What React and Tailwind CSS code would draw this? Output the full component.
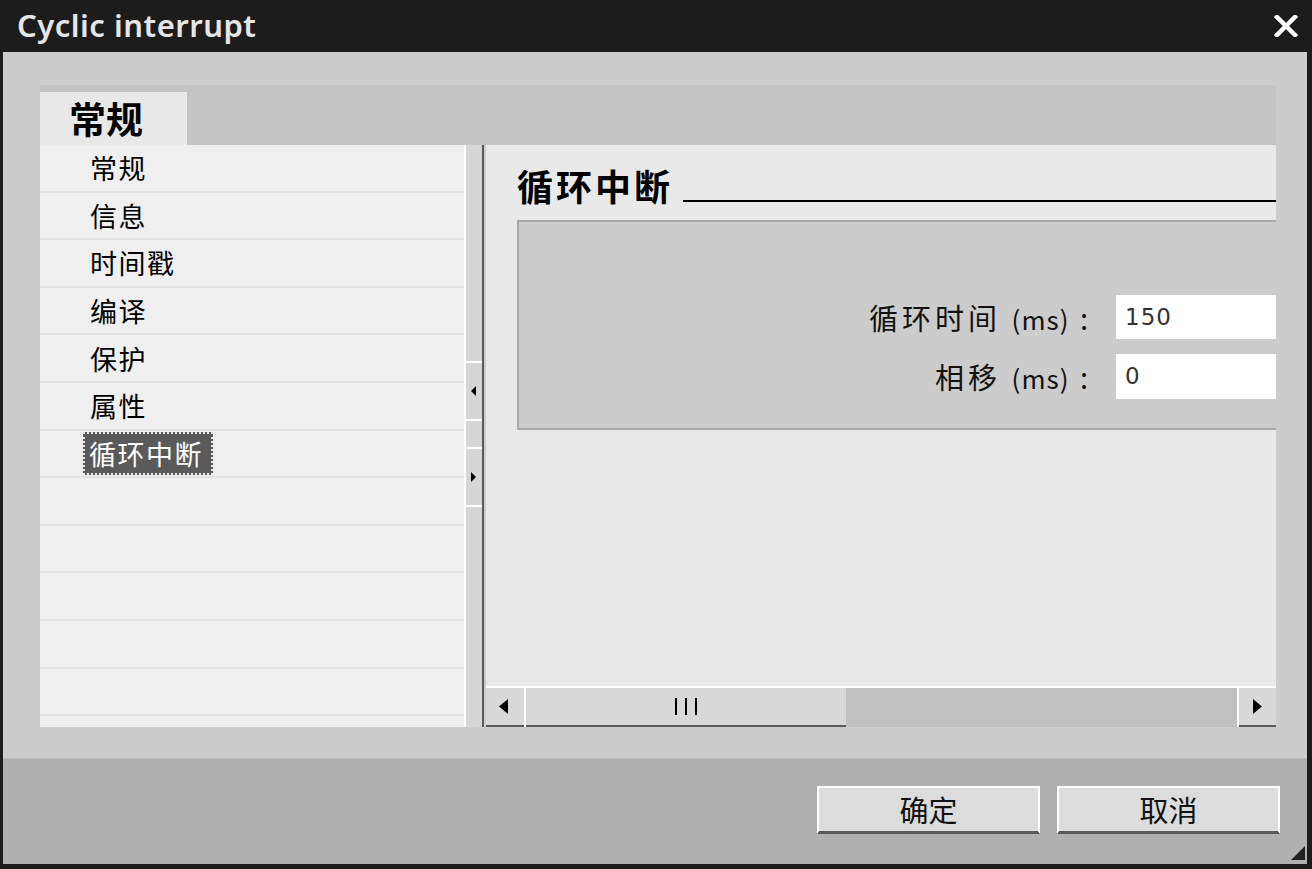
import React from "react";

const CJK = { fontFamily: '"Noto Sans CJK SC", "Noto Sans", sans-serif' };

function TriLeft({ className = "" }) {
  return (
    <svg viewBox="0 0 8 12" preserveAspectRatio="none" className={className}>
      <polygon points="8,0 8,12 0,6" fill="#000" />
    </svg>
  );
}
function TriRight({ className = "" }) {
  return (
    <svg viewBox="0 0 8 12" preserveAspectRatio="none" className={className}>
      <polygon points="0,0 0,12 8,6" fill="#000" />
    </svg>
  );
}

const items = ["常规", "信息", "时间戳", "编译", "保护", "属性", "循环中断", "", "", "", "", ""];

export default function App() {
  return (
    <div
      className="w-[1312px] h-[869px] bg-[#1c1c1c] flex flex-col overflow-hidden"
      style={CJK}
    >
      {/* Title bar */}
      <div className="h-[52px] flex items-center justify-between pl-[17px] pr-[14px] shrink-0">
        <span
          className="text-[31px] font-semibold text-[#e6e6e6] leading-none -mt-[2px] tracking-[0.5px]"
          style={{ fontFamily: '"Noto Sans", "Open Sans", sans-serif' }}
        >
          Cyclic interrupt
        </span>
        <svg width="24" height="22" viewBox="0 0 24 22" className="-mt-[1px]">
          <path d="M3 2 L21 20 M21 2 L3 20" stroke="#fff" strokeWidth="4.5" strokeLinecap="square" />
        </svg>
      </div>

      {/* Body */}
      <div className="flex-1 ml-[3px] mr-[5px] mb-[5px] flex flex-col">
        {/* Upper area */}
        <div className="h-[706px] bg-[#cccccc] pl-[37px] pr-[31px] pt-[33px] flex flex-col">
          {/* Tab bar */}
          <div className="h-[60px] bg-[#c4c4c4] flex items-end shrink-0">
            <div className="w-[147px] h-[53px] bg-[#e8e8e8] flex items-center pl-[29px]">
              <span className="text-[37px] font-bold text-black leading-none">常规</span>
            </div>
          </div>

          {/* Main */}
          <div className="h-[582px] flex">
            {/* Left list */}
            <div className="w-[426px] bg-[#efefef] border-r-2 border-white flex flex-col">
              {items.map((t, i) => (
                <div
                  key={i}
                  className="h-[47.6px] border-b-2 border-[#e3e3e3] flex items-center pl-[50px] shrink-0"
                >
                  {t === "循环中断" ? (
                    <span className="bg-[#5a5a5a] text-white text-[27px] leading-none tracking-[1.5px] pl-[6px] pr-[10px] py-[8px] outline-2 outline-dotted outline-[#e8e8e8] -outline-offset-2 -ml-[7px]">
                      {t}
                    </span>
                  ) : (
                    <span className="text-[27px] text-black leading-none tracking-[1.5px]">{t}</span>
                  )}
                </div>
              ))}
            </div>

            {/* Splitter */}
            <div className="w-[20px] flex">
              <div className="w-[16px] bg-[#d6d6d6] flex flex-col">
                <div className="h-[216px]" />
                <div className="h-[2px] bg-white" />
                <div className="h-[56px] flex items-center pl-[5px]">
                  <TriLeft className="w-[5px] h-[10px] shrink-0" />
                </div>
                <div className="h-[2px] bg-white" />
                <div className="h-[26px]" />
                <div className="h-[2px] bg-white" />
                <div className="h-[56px] flex items-center pl-[5px]">
                  <TriRight className="w-[5px] h-[10px] shrink-0" />
                </div>
                <div className="h-[2px] bg-white" />
              </div>
              <div className="w-[2px] bg-[#5a5a5a]" />
              <div className="w-[2px] bg-[#cccccc]" />
            </div>

            {/* Right panel */}
            <div className="flex-1 flex flex-col">
              <div className="flex-1 bg-[#e9e9e9] pl-[31px] pt-[18px] overflow-hidden flex flex-col">
                <div className="flex items-end h-[40px]">
                  <span className="text-[36px] font-bold text-black leading-none tracking-[3px]">循环中断</span>
                  <div className="flex-1 h-[2px] bg-black ml-[10px] mb-[1px]" />
                </div>
                <div className="mt-[17px] h-[210px] bg-[#cccccc] border-l-2 border-t-2 border-b-2 border-[#a9a9a9] flex flex-col items-end pt-[73px] gap-[15px]">
                  <div className="flex items-center h-[44px]">
                    <span className="text-[29px] text-[#111] leading-none tracking-[4px]">
                      循环时间 <span className="text-[26px] tracking-[1px]">(ms)</span> :
                    </span>
                    <div
                      className="ml-[24px] w-[160px] h-[44px] bg-white flex items-center pl-[9px] text-[23px] text-[#333] tracking-[1px]"
                      style={{ fontFamily: '"DejaVu Sans", sans-serif' }}
                    >
                      150
                    </div>
                  </div>
                  <div className="flex items-center h-[45px]">
                    <span className="text-[29px] text-[#111] leading-none tracking-[4px]">
                      相移 <span className="text-[26px] tracking-[1px]">(ms)</span> :
                    </span>
                    <div
                      className="ml-[24px] w-[160px] h-[45px] bg-white flex items-center pl-[9px] text-[23px] text-[#333]"
                      style={{ fontFamily: '"DejaVu Sans", sans-serif' }}
                    >
                      0
                    </div>
                  </div>
                </div>
              </div>
              <div className="h-[2px] bg-white" />
              {/* Horizontal scrollbar */}
              <div className="h-[39px] flex bg-[#c0c0c0]">
                <div className="w-[38px] bg-[#d8d8d8] border-b-2 border-[#5a5a5a] flex items-center justify-center">
                  <TriLeft className="w-[9px] h-[15px] shrink-0 -ml-[4px]" />
                </div>
                <div className="w-[2px] bg-white" />
                <div className="w-[320px] bg-[#d8d8d8] border-b-2 border-[#5a5a5a] flex items-center justify-center gap-[8px]">
                  <div className="w-[2px] h-[17px] bg-black" />
                  <div className="w-[2px] h-[17px] bg-black" />
                  <div className="w-[2px] h-[17px] bg-black" />
                </div>
                <div className="flex-1" />
                <div className="w-[2px] bg-white" />
                <div className="w-[37px] bg-[#d8d8d8] border-b-2 border-[#5a5a5a] flex items-center justify-center">
                  <TriRight className="w-[9px] h-[15px] shrink-0" />
                </div>
              </div>
            </div>
          </div>
        </div>

        {/* Footer */}
        <div className="flex-1 bg-[#b0b0b0] border-t border-[#bdbdbd] relative flex justify-end items-start pt-[27px] pr-[27px] gap-[17px]">
          <button className="w-[223px] h-[48px] bg-[#dcdcdc] border-t-2 border-l-2 border-r-2 border-white border-b-[3px] border-b-[#5a5a5a] text-[29px] text-[#111] leading-none flex items-center justify-center">
            确定
          </button>
          <button className="w-[223px] h-[48px] bg-[#dcdcdc] border-t-2 border-l-2 border-r-2 border-white border-b-[3px] border-b-[#5a5a5a] text-[29px] text-[#111] leading-none flex items-center justify-center">
            取消
          </button>
          <svg width="14" height="14" viewBox="0 0 14 14" className="absolute right-[2px] bottom-[4px]">
            <polygon points="14,0 14,14 0,14" fill="#222" />
          </svg>
        </div>
      </div>
    </div>
  );
}
